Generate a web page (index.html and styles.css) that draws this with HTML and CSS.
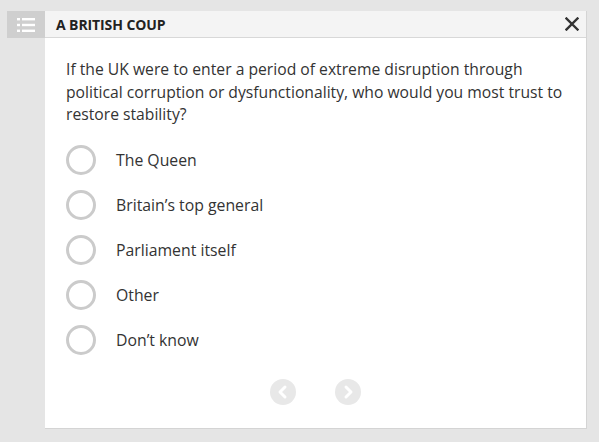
FILE: index.html
```html
<!DOCTYPE html>
<html>
<head>
<meta charset="utf-8">
<link rel="stylesheet" href="styles.css">
</head>
<body>
<div class="wrap">
  <div class="side">
    <div class="menu-btn">
      <svg width="18" height="14" viewBox="0 0 18 14">
        <g fill="#fff">
          <rect x="0" y="0" width="3" height="2.4"/>
          <rect x="5" y="0" width="13" height="2.4"/>
          <rect x="0" y="5.8" width="3" height="2.4"/>
          <rect x="5" y="5.8" width="13" height="2.4"/>
          <rect x="0" y="11.6" width="3" height="2.4"/>
          <rect x="5" y="11.6" width="13" height="2.4"/>
        </g>
      </svg>
    </div>
  </div>
  <div class="panel">
    <div class="header">
      <div class="title">A BRITISH COUP</div>
      <div class="close">
        <svg width="14" height="14" viewBox="0 0 14 14">
          <path d="M1.5 1.5 L12.5 12.5 M12.5 1.5 L1.5 12.5" stroke="#333" stroke-width="2.4" stroke-linecap="square"/>
        </svg>
      </div>
    </div>
    <div class="body">
      <p class="question">If the UK were to enter a period of extreme disruption through political corruption or dysfunctionality, who would you most trust to restore stability?</p>
      <ul class="options">
        <li class="option"><span class="radio"></span><span class="label">The Queen</span></li>
        <li class="option"><span class="radio"></span><span class="label">Britain’s top general</span></li>
        <li class="option"><span class="radio"></span><span class="label">Parliament itself</span></li>
        <li class="option"><span class="radio"></span><span class="label">Other</span></li>
        <li class="option"><span class="radio"></span><span class="label">Don’t know</span></li>
      </ul>
      <div class="nav">
        <span class="navbtn">
          <svg width="26" height="26" viewBox="0 0 26 26"><path d="M15 8 L10 13 L15 18" stroke="#fff" stroke-width="3" fill="none" stroke-linecap="round" stroke-linejoin="round"/></svg>
        </span>
        <span class="navbtn">
          <svg width="26" height="26" viewBox="0 0 26 26"><path d="M11 8 L16 13 L11 18" stroke="#fff" stroke-width="3" fill="none" stroke-linecap="round" stroke-linejoin="round"/></svg>
        </span>
      </div>
    </div>
  </div>
</div>
</body>
</html>
```
FILE: styles.css
```css
html, body {
  margin: 0;
  padding: 0;
  background: #e5e5e5;
  width: 599px;
  height: 442px;
  overflow: hidden;
}
body {
  font-family: "Open Sans", "Liberation Sans", sans-serif;
  color: #333;
}
.wrap {
  display: flex;
  padding: 11px 11px 0 7px;
}
.side {
  width: 38px;
}
.menu-btn {
  width: 38px;
  height: 27px;
  background: #cfcfcf;
  display: flex;
  align-items: center;
  justify-content: center;
}
.panel {
  width: 541px;
  height: 417px;
  background: #fff;
  border-right: 1px solid #d4d4d4;
  border-bottom: 1px solid #d4d4d4;
}
.header {
  height: 26px;
  background: #f4f4f4;
  border-bottom: 1px solid #d8d8d8;
  display: flex;
  align-items: center;
  justify-content: space-between;
  padding: 0 7px 0 11px;
}
.title {
  font-weight: 700;
  font-size: 14px;
  color: #222;
  letter-spacing: -0.1px;
}
.close {
  display: flex;
  align-items: center;
}
.body {
  padding: 0 0 0 21px;
}
.question {
  margin: 20px 0 0 0;
  font-size: 15.7px;
  line-height: 22.5px;
  color: #333;
  width: 505px;
}
.options {
  list-style: none;
  margin: 12px 0 0 0;
  padding: 0;
}
.option {
  display: flex;
  align-items: center;
  height: 45px;
}
.radio {
  width: 24px;
  height: 24px;
  border: 3px solid #cbcbcb;
  border-radius: 50%;
}
.label {
  margin-left: 20px;
  font-size: 15.8px;
  color: #333;
}
.nav {
  display: flex;
  gap: 39px;
  margin: 16px 0 0 204px;
}
.navbtn {
  width: 26px;
  height: 26px;
  border-radius: 50%;
  background: #e8e8e8;
  display: flex;
}
```
